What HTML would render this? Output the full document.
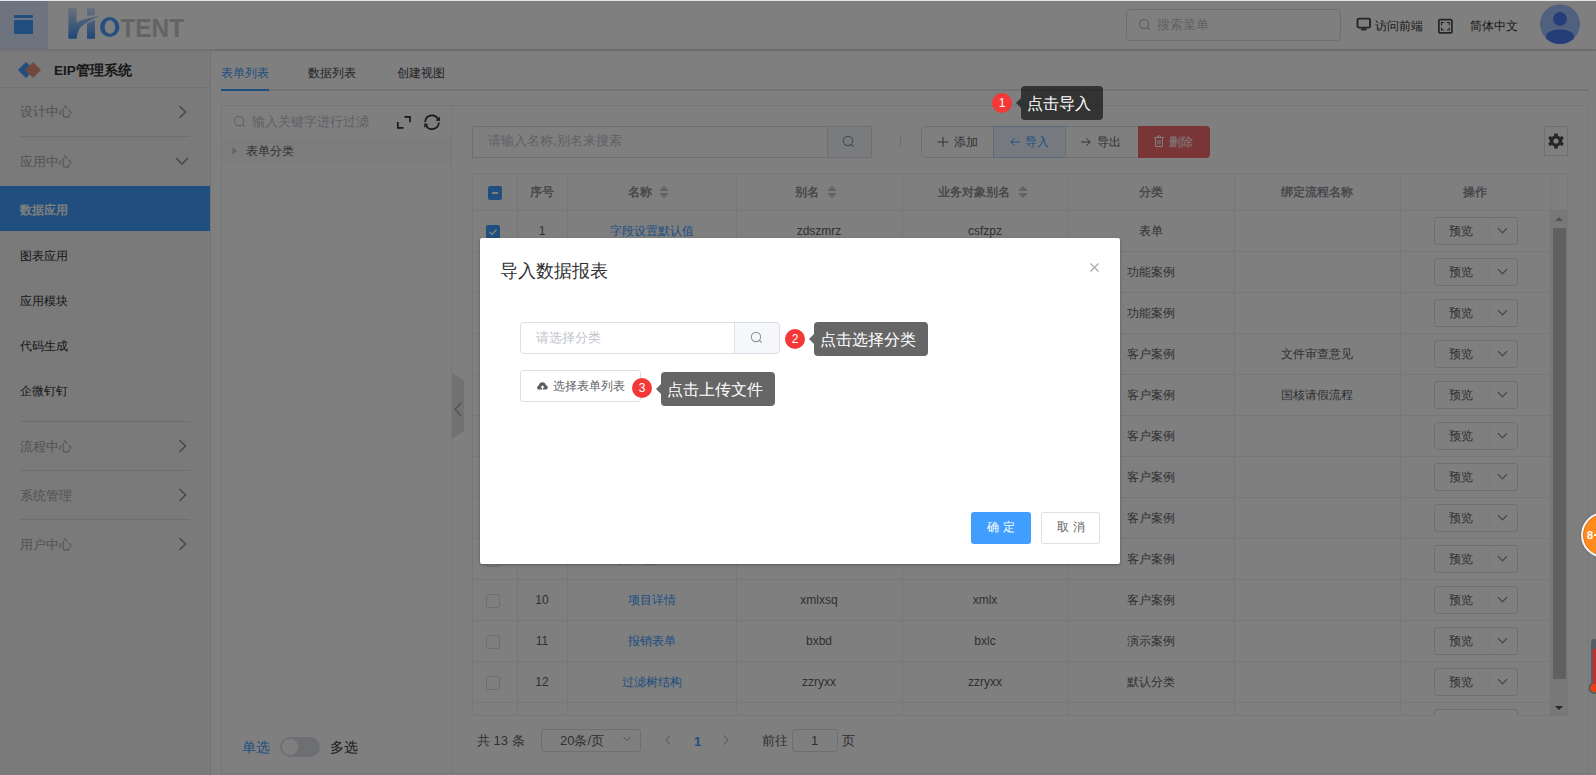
<!DOCTYPE html>
<html><head><meta charset="utf-8">
<style>
*{box-sizing:border-box;margin:0;padding:0}
html,body{width:1596px;height:775px;overflow:hidden;background:#fff;font-family:"Liberation Sans",sans-serif;color:#303133}
.a{position:absolute}
.t{position:absolute;white-space:nowrap;line-height:1}
.mi{position:absolute;left:20px;font-size:13px;line-height:14px;color:#a3a6ad;white-space:nowrap}
.si{position:absolute;left:20px;font-size:12px;line-height:12px;color:#303133;white-space:nowrap}
.sep{position:absolute;left:20px;width:170px;height:1px;background:#dcdcdc}
.vl{position:absolute;width:1px;background:#ebeef5}
.hl{position:absolute;height:1px;background:#ebeef5}
.cell{position:absolute;font-size:12px;line-height:12px;text-align:center;white-space:nowrap;color:#606266}
.hcell{position:absolute;font-size:12px;line-height:12px;text-align:center;white-space:nowrap;color:#909399;font-weight:bold}
.cb{position:absolute;width:14px;height:14px;border:1px solid #dcdfe6;border-radius:2px;background:#fff}
.pv{position:absolute;left:1434px;width:84px;height:28px;border:1px solid #dcdfe6;border-radius:3px;background:#fff}
.pv span{position:absolute;left:14px;top:7px;font-size:12px;line-height:12px;color:#606266}
.pv i{position:absolute;left:54px;top:5px;width:1px;height:16px;background:#ebeef5}
.pv b{position:absolute;left:64px;top:7px;width:7px;height:7px;border-right:1px solid #7a7c80;border-bottom:1px solid #7a7c80;transform:rotate(45deg)}
.sort{position:absolute;width:8px;height:12px}
.sort:before{content:"";position:absolute;left:-1px;top:0;border-left:5px solid transparent;border-right:5px solid transparent;border-bottom:5px solid #c0c4cc}
.sort:after{content:"";position:absolute;left:-1px;top:7px;border-left:5px solid transparent;border-right:5px solid transparent;border-top:5px solid #c0c4cc}
#mask{left:0;top:0;width:1596px;height:775px;background:rgba(0,0,0,.5)}
.badge{position:absolute;width:20px;height:20px;border-radius:50%;background:#f43838;color:#fff;font-size:12px;line-height:20px;text-align:center}
.tip{position:absolute;height:34px;border-radius:4px;color:#fff;font-size:16px;line-height:36px;white-space:nowrap;padding-left:6px}
.tip:before{content:"";position:absolute;left:-5px;top:12px;border-top:5px solid transparent;border-bottom:5px solid transparent;border-right:5px solid currentColor}
</style></head><body>

<div class="a" style="left:0;top:0;width:1596px;height:49px;background:#fff;box-shadow:0 1px 3px rgba(0,0,0,.12)"></div>
<div class="a" style="left:0;top:1px;width:48px;height:48px;background:#dde9ff"></div>
<div class="a" style="left:14px;top:15px;width:19px;height:3px;background:#409eff;border-radius:1px"></div>
<div class="a" style="left:14px;top:20px;width:19px;height:14px;background:#409eff;border-radius:1px"></div>
<svg class="a" style="left:0;top:0" width="200" height="50">
<defs><linearGradient id="lg" gradientUnits="userSpaceOnUse" x1="0" y1="8" x2="0" y2="39"><stop offset="0" stop-color="#d2e2f8"/><stop offset="1" stop-color="#3f8cf0"/></linearGradient></defs>
<path fill="url(#lg)" d="M68.4,8 H76.5 V22.4 C80,20.6 84,19.2 87,18.5 C91,17.5 95,16.4 99.8,15.6 C97,17.2 91,20.3 87,22.4 C83,24.5 79.5,27.5 78.3,31 C77.3,34 76.9,36.5 76.7,38.7 H68.4 Z"/>
<path fill="url(#lg)" d="M87,8 H95 V15 L87,15.9 Z"/>
<path fill="url(#lg)" d="M87,23.4 L95,19.7 V38.7 H87 Z"/>
<path fill-rule="evenodd" fill="#4a9eff" d="M100,27 A9.75,10 0 1 0 119.5,27 A9.75,10 0 1 0 100,27 Z M104.6,27 A5.3,6.7 0 1 0 115.2,27 A5.3,6.7 0 1 0 104.6,27 Z"/>
<text x="120.5" y="37" font-family="Liberation Sans" font-weight="bold" font-size="25.5" fill="#c6c6c6" textLength="63.5" lengthAdjust="spacingAndGlyphs">TENT</text>
</svg>
<div class="a" style="left:1126px;top:9px;width:215px;height:32px;border:1px solid #dcdfe6;border-radius:4px;background:#fff"></div>
<svg class="a" style="left:1138px;top:18px" width="14" height="14"><circle cx="6" cy="6" r="4.6" fill="none" stroke="#c0c4cc" stroke-width="1.2"/><path d="M9.3,9.3 L11.5,11.5" stroke="#c0c4cc" stroke-width="1.3"/></svg>
<div class="t" style="left:1157px;top:18px;font-size:13px;color:#c0c4cc">搜索菜单</div>
<svg class="a" style="left:1356px;top:17px" width="16" height="15"><rect x="1.5" y="1.6" width="12.6" height="9" rx="1.5" fill="none" stroke="#4a4b4e" stroke-width="1.9"/><rect x="5" y="11.5" width="5.6" height="1.9" fill="#4a4b4e"/></svg>
<div class="t" style="left:1375px;top:19.5px;font-size:12px;color:#303133">访问前端</div>
<svg class="a" style="left:1437px;top:18px" width="17" height="17"><rect x="1.9" y="1.6" width="13" height="13.3" rx="1.2" fill="none" stroke="#4a4b4e" stroke-width="1.7"/><path d="M4.5,7.2 V4.5 H7.2 M9.8,4.5 H12.3 V7.2 M12.3,9.6 V12 H9.8 M7.2,12 H4.5 V9.6" fill="none" stroke="#4a4b4e" stroke-width="1.2"/></svg>
<div class="t" style="left:1470px;top:20px;font-size:12px;color:#303133">简体中文</div>
<svg class="a" style="left:1539px;top:4px" width="42" height="41"><defs><clipPath id="cc"><circle cx="21" cy="20.2" r="20"/></clipPath></defs><circle cx="21" cy="20.2" r="20" fill="#a0c0ff"/><g clip-path="url(#cc)" fill="#4a7af0"><circle cx="21" cy="14.9" r="7"/><ellipse cx="21" cy="32.7" rx="14" ry="7.2"/></g></svg>

<div class="a" style="left:0;top:49px;width:210px;height:726px;background:#f4f4f5"></div>
<div class="a" style="left:210px;top:50px;width:1386px;height:725px;border-left:1px solid #e4e7ed;border-top:1px solid #e4e7ed"></div>
<svg class="a" style="left:16px;top:60px" width="28" height="20"><path d="M10,3 L17,10 L10,17 L3,10 Z" fill="#409eff" stroke="#409eff" stroke-width="1.6" stroke-linejoin="round"/><path d="M17,3 L24,10 L17,17 L10,10 Z" fill="#e3927c" stroke="#e3927c" stroke-width="1.6" stroke-linejoin="round"/></svg>
<div class="t" style="left:54px;top:64px;font-size:13.5px;font-weight:bold;color:#303133">EIP管理系统</div>
<div class="a" style="left:0;top:87px;width:210px;height:1px;background:#e2e2e2"></div>
<div class="mi" style="top:105px">设计中心</div>
<svg class="a" style="left:176px;top:104px" width="14" height="16"><path d="M3.5,2 L9.5,8 L3.5,14" fill="none" stroke="#909399" stroke-width="1.6"/></svg>
<div class="sep" style="top:136px"></div>
<div class="mi" style="top:155px">应用中心</div>
<svg class="a" style="left:174px;top:155px" width="16" height="12"><path d="M2,3 L8,9 L14,3" fill="none" stroke="#909399" stroke-width="1.6"/></svg>
<div class="a" style="left:0;top:186px;width:210px;height:45px;background:#409eff"></div>
<div class="si" style="top:204px;color:#fff;font-weight:bold">数据应用</div>
<div class="si" style="top:250px">图表应用</div>
<div class="si" style="top:295px">应用模块</div>
<div class="si" style="top:340px">代码生成</div>
<div class="si" style="top:385px">企微钉钉</div>
<div class="sep" style="top:421px"></div>
<div class="mi" style="top:440px">流程中心</div>
<svg class="a" style="left:176px;top:438px" width="14" height="16"><path d="M3.5,2 L9.5,8 L3.5,14" fill="none" stroke="#909399" stroke-width="1.6"/></svg>
<div class="sep" style="top:470px"></div>
<div class="mi" style="top:489px">系统管理</div>
<svg class="a" style="left:176px;top:487px" width="14" height="16"><path d="M3.5,2 L9.5,8 L3.5,14" fill="none" stroke="#909399" stroke-width="1.6"/></svg>
<div class="sep" style="top:519px"></div>
<div class="mi" style="top:538px">用户中心</div>
<svg class="a" style="left:176px;top:536px" width="14" height="16"><path d="M3.5,2 L9.5,8 L3.5,14" fill="none" stroke="#909399" stroke-width="1.6"/></svg>

<div class="a" style="left:0;top:49px;width:1596px;height:3px;background:linear-gradient(rgba(0,0,0,.09),rgba(0,0,0,0))"></div>
<div class="t" style="left:221px;top:67px;font-size:12px;color:#409eff">表单列表</div>
<div class="t" style="left:308px;top:67px;font-size:12px;color:#46484c">数据列表</div>
<div class="t" style="left:397px;top:67px;font-size:12px;color:#46484c">创建视图</div>
<div class="a" style="left:221px;top:89px;width:1368px;height:2px;background:#e4e7ed"></div>
<div class="a" style="left:221px;top:89px;width:48px;height:2px;background:#409eff"></div>

<div class="a" style="left:221px;top:105px;width:231px;height:669px;border:1px solid #ebeef5;background:#fff"></div>
<svg class="a" style="left:233px;top:115px" width="14" height="14"><circle cx="6" cy="6" r="4.6" fill="none" stroke="#c0c4cc" stroke-width="1.1"/><path d="M9.3,9.3 L11.5,11.5" stroke="#c0c4cc" stroke-width="1.2"/></svg>
<div class="t" style="left:252px;top:115px;font-size:13px;color:#c0c4cc">输入关键字进行过滤</div>
<svg class="a" style="left:396px;top:114px" width="16" height="16"><path d="M1.8,8 V13.9 H7.5 M8.5,2.8 H14 V8.2" fill="none" stroke="#303133" stroke-width="1.7"/></svg>
<svg class="a" style="left:423px;top:113px" width="18" height="18"><path d="M2.2,9.2 A6.8,6.8 0 0 1 14.9,5.8 M15.8,9.4 A6.8,6.8 0 0 1 3.1,12.6" fill="none" stroke="#303133" stroke-width="1.7"/><path d="M12.6,7.4 L16.9,3.6 L16.9,7.9 Z M5.4,11 L1.3,14.8 L1.3,10.5 Z" fill="#303133"/></svg>
<div class="a" style="left:222px;top:138px;width:229px;height:25px;background:#fafafa"></div>
<svg class="a" style="left:231px;top:146px" width="8" height="10"><path d="M1.5,1.5 L6,5 L1.5,8.5 Z" fill="#c0c4cc"/></svg>
<div class="t" style="left:246px;top:145px;font-size:12px;color:#606266">表单分类</div>
<div class="t" style="left:242px;top:740px;font-size:14px;color:#409eff">单选</div>
<div class="a" style="left:280px;top:737px;width:40px;height:20px;border-radius:10px;background:#dcdfe6"></div>
<div class="a" style="left:282px;top:739px;width:16px;height:16px;border-radius:50%;background:#fff"></div>
<div class="t" style="left:330px;top:740px;font-size:14px;color:#303133">多选</div>

<div class="a" style="left:452px;top:105px;width:1137px;height:669px;border:1px solid #ebeef5;border-left:none;background:#fff"></div>
<div class="a" style="left:472px;top:126px;width:400px;height:32px;border:1px solid #dcdfe6;background:#fff"></div>
<div class="a" style="left:827px;top:126px;width:45px;height:32px;border:1px solid #dcdfe6;background:#f5f7fa"></div>
<div class="t" style="left:488px;top:134px;font-size:13px;color:#c0c4cc">请输入名称,别名来搜索</div>
<svg class="a" style="left:842px;top:135px" width="14" height="14"><circle cx="6" cy="6" r="4.6" fill="none" stroke="#909399" stroke-width="1.1"/><path d="M9.3,9.3 L11.5,11.5" stroke="#909399" stroke-width="1.2"/></svg>
<div class="a" style="left:900px;top:136px;width:1px;height:12px;background:#dcdfe6"></div>
<div class="a" style="left:921px;top:126px;width:289px;height:32px;border:1px solid #dcdfe6;border-radius:4px;background:#fff"></div>
<div class="a" style="left:993px;top:126px;width:73px;height:32px;border:1px solid #b3d8ff;background:#ecf5ff"></div>
<div class="a" style="left:1065px;top:126px;width:1px;height:32px;background:#dcdfe6"></div>
<div class="a" style="left:1138px;top:126px;width:72px;height:32px;background:#f56c6c;border-radius:0 4px 4px 0"></div>
<svg class="a" style="left:936px;top:135px" width="14" height="14"><path d="M7,2 V12 M1.5,7 H12.5" stroke="#606266" stroke-width="1"/></svg>
<div class="t" style="left:954px;top:136px;font-size:12px;color:#606266">添加</div>
<svg class="a" style="left:1008px;top:135px" width="14" height="14"><path d="M12,7 H2.8 M6.5,3.3 L2.8,7 L6.5,10.7" fill="none" stroke="#409eff" stroke-width="1"/></svg>
<div class="t" style="left:1025px;top:136px;font-size:12px;color:#409eff">导入</div>
<svg class="a" style="left:1079px;top:135px" width="14" height="14"><path d="M2,7 H11.2 M7.5,3.3 L11.2,7 L7.5,10.7" fill="none" stroke="#606266" stroke-width="1"/></svg>
<div class="t" style="left:1097px;top:136px;font-size:12px;color:#606266">导出</div>
<svg class="a" style="left:1152px;top:134px" width="14" height="15"><path d="M2,3.5 H12 M5.5,3.5 V2 H8.5 V3.5 M3.5,3.5 V12.5 H10.5 V3.5 M6,6 V10.5 M8,6 V10.5" fill="none" stroke="#fff" stroke-width="1"/></svg>
<div class="t" style="left:1169px;top:136px;font-size:12px;color:#fff">删除</div>
<div class="a" style="left:1544px;top:126px;width:24px;height:30px;border:1px solid #dcdfe6;background:#fff"></div>
<svg class="a" style="left:1547px;top:132px" width="18" height="18"><g transform="translate(9,9)" fill="#4a4b4d"><path d="M-1.6,-7.5 H1.6 L2,-5.2 L4.2,-4 L6.3,-5 L7.8,-2.4 L6.1,-0.9 V0.9 L7.8,2.4 L6.3,5 L4.2,4 L2,5.2 L1.6,7.5 H-1.6 L-2,5.2 L-4.2,4 L-6.3,5 L-7.8,2.4 L-6.1,0.9 V-0.9 L-7.8,-2.4 L-6.3,-5 L-4.2,-4 L-2,-5.2 Z"/><circle r="2.6" fill="#fff"/></g></svg>

<svg class="a" style="left:452px;top:373px" width="13" height="66"><path d="M0,0 L12,7 L12,58 L0,66 Z" fill="#e4e4e4"/><path d="M9,30 L3,36.5 L9,43" fill="none" stroke="#a0a0a0" stroke-width="1.2"/></svg>

<div class="a" style="left:472px;top:173px;width:1096px;height:543px;border:1px solid #ebeef5;background:#fff"></div>
<div class="vl" style="left:517px;top:173px;height:543px"></div>
<div class="vl" style="left:567px;top:173px;height:543px"></div>
<div class="vl" style="left:736px;top:173px;height:543px"></div>
<div class="vl" style="left:902px;top:173px;height:543px"></div>
<div class="vl" style="left:1068px;top:173px;height:543px"></div>
<div class="vl" style="left:1234px;top:173px;height:543px"></div>
<div class="vl" style="left:1400px;top:173px;height:543px"></div>
<div class="vl" style="left:1550px;top:173px;height:543px"></div>
<div class="hl" style="left:472px;top:210px;width:1096px"></div>
<div class="hl" style="left:472px;top:251px;width:1078px"></div>
<div class="hl" style="left:472px;top:292px;width:1078px"></div>
<div class="hl" style="left:472px;top:333px;width:1078px"></div>
<div class="hl" style="left:472px;top:374px;width:1078px"></div>
<div class="hl" style="left:472px;top:415px;width:1078px"></div>
<div class="hl" style="left:472px;top:456px;width:1078px"></div>
<div class="hl" style="left:472px;top:497px;width:1078px"></div>
<div class="hl" style="left:472px;top:538px;width:1078px"></div>
<div class="hl" style="left:472px;top:579px;width:1078px"></div>
<div class="hl" style="left:472px;top:620px;width:1078px"></div>
<div class="hl" style="left:472px;top:661px;width:1078px"></div>
<div class="hl" style="left:472px;top:702px;width:1078px"></div>
<div class="a" style="left:488px;top:186px;width:14px;height:14px;background:#409eff;border-radius:2px"></div><div class="a" style="left:492px;top:192px;width:6px;height:2px;background:#fff"></div>
<div class="hcell" style="left:517px;top:186px;width:50px">序号</div>
<div class="hcell" style="left:628px;top:186px;text-align:left">名称</div>
<div class="sort" style="left:660px;top:186px"></div>
<div class="hcell" style="left:795px;top:186px;text-align:left">别名</div>
<div class="sort" style="left:828px;top:186px"></div>
<div class="hcell" style="left:938px;top:186px;text-align:left">业务对象别名</div>
<div class="sort" style="left:1019px;top:186px"></div>
<div class="hcell" style="left:1068px;top:186px;width:166px">分类</div>
<div class="hcell" style="left:1234px;top:186px;width:166px">绑定流程名称</div>
<div class="hcell" style="left:1400px;top:186px;width:150px">操作</div>
<div class="a" style="left:0;top:0;width:1596px;height:775px;clip-path:inset(211px 0 59px 0)">
<div class="a" style="left:486px;top:225px;width:14px;height:14px;background:#409eff;border-radius:2px"></div><svg class="a" style="left:486px;top:225px" width="14" height="14"><path d="M3.5,7 L6,9.5 L10.5,4.5" fill="none" stroke="#fff" stroke-width="1.3"/></svg>
<div class="cell" style="left:517px;top:225px;width:50px;color:#606266">1</div>
<div class="cell" style="left:567px;top:225px;width:169px;color:#409eff">字段设置默认值</div>
<div class="cell" style="left:736px;top:225px;width:166px;color:#606266">zdszmrz</div>
<div class="cell" style="left:902px;top:225px;width:166px;color:#606266">csfzpz</div>
<div class="cell" style="left:1068px;top:225px;width:166px;color:#606266">表单</div>
<div class="pv" style="top:217px"><span>预览</span><i></i><b></b></div>
<div class="cb" style="left:486px;top:266px"></div>
<div class="cell" style="left:517px;top:266px;width:50px;color:#606266">2</div>
<div class="cell" style="left:567px;top:266px;width:169px;color:#409eff">流程表单示例</div>
<div class="cell" style="left:736px;top:266px;width:166px;color:#606266">lcbdsl</div>
<div class="cell" style="left:902px;top:266px;width:166px;color:#606266">lcbd</div>
<div class="cell" style="left:1068px;top:266px;width:166px;color:#606266">功能案例</div>
<div class="pv" style="top:258px"><span>预览</span><i></i><b></b></div>
<div class="cb" style="left:486px;top:307px"></div>
<div class="cell" style="left:517px;top:307px;width:50px;color:#606266">3</div>
<div class="cell" style="left:567px;top:307px;width:169px;color:#409eff">表单数据示例</div>
<div class="cell" style="left:736px;top:307px;width:166px;color:#606266">bdsjsl</div>
<div class="cell" style="left:902px;top:307px;width:166px;color:#606266">bdsj</div>
<div class="cell" style="left:1068px;top:307px;width:166px;color:#606266">功能案例</div>
<div class="pv" style="top:299px"><span>预览</span><i></i><b></b></div>
<div class="cb" style="left:486px;top:348px"></div>
<div class="cell" style="left:517px;top:348px;width:50px;color:#606266">4</div>
<div class="cell" style="left:567px;top:348px;width:169px;color:#409eff">文件审查意见</div>
<div class="cell" style="left:736px;top:348px;width:166px;color:#606266">wjscyj</div>
<div class="cell" style="left:902px;top:348px;width:166px;color:#606266">wjsc</div>
<div class="cell" style="left:1068px;top:348px;width:166px;color:#606266">客户案例</div>
<div class="cell" style="left:1234px;top:348px;width:166px;color:#606266">文件审查意见</div>
<div class="pv" style="top:340px"><span>预览</span><i></i><b></b></div>
<div class="cb" style="left:486px;top:389px"></div>
<div class="cell" style="left:517px;top:389px;width:50px;color:#606266">5</div>
<div class="cell" style="left:567px;top:389px;width:169px;color:#409eff">国核请假流程</div>
<div class="cell" style="left:736px;top:389px;width:166px;color:#606266">ghqjlc</div>
<div class="cell" style="left:902px;top:389px;width:166px;color:#606266">ghqj</div>
<div class="cell" style="left:1068px;top:389px;width:166px;color:#606266">客户案例</div>
<div class="cell" style="left:1234px;top:389px;width:166px;color:#606266">国核请假流程</div>
<div class="pv" style="top:381px"><span>预览</span><i></i><b></b></div>
<div class="cb" style="left:486px;top:430px"></div>
<div class="cell" style="left:517px;top:430px;width:50px;color:#606266">6</div>
<div class="cell" style="left:567px;top:430px;width:169px;color:#409eff">客户信息登记</div>
<div class="cell" style="left:736px;top:430px;width:166px;color:#606266">khxxdj</div>
<div class="cell" style="left:902px;top:430px;width:166px;color:#606266">khxx</div>
<div class="cell" style="left:1068px;top:430px;width:166px;color:#606266">客户案例</div>
<div class="pv" style="top:422px"><span>预览</span><i></i><b></b></div>
<div class="cb" style="left:486px;top:471px"></div>
<div class="cell" style="left:517px;top:471px;width:50px;color:#606266">7</div>
<div class="cell" style="left:567px;top:471px;width:169px;color:#409eff">合同审批表单</div>
<div class="cell" style="left:736px;top:471px;width:166px;color:#606266">htspbd</div>
<div class="cell" style="left:902px;top:471px;width:166px;color:#606266">htsp</div>
<div class="cell" style="left:1068px;top:471px;width:166px;color:#606266">客户案例</div>
<div class="pv" style="top:463px"><span>预览</span><i></i><b></b></div>
<div class="cb" style="left:486px;top:512px"></div>
<div class="cell" style="left:517px;top:512px;width:50px;color:#606266">8</div>
<div class="cell" style="left:567px;top:512px;width:169px;color:#409eff">项目立项申请</div>
<div class="cell" style="left:736px;top:512px;width:166px;color:#606266">xmlxsq2</div>
<div class="cell" style="left:902px;top:512px;width:166px;color:#606266">xmlx2</div>
<div class="cell" style="left:1068px;top:512px;width:166px;color:#606266">客户案例</div>
<div class="pv" style="top:504px"><span>预览</span><i></i><b></b></div>
<div class="cb" style="left:486px;top:553px"></div>
<div class="cell" style="left:517px;top:553px;width:50px;color:#606266">9</div>
<div class="cell" style="left:567px;top:553px;width:169px;color:#409eff">项目进度管理</div>
<div class="cell" style="left:736px;top:553px;width:166px;color:#606266">xmxxdc</div>
<div class="cell" style="left:902px;top:553px;width:166px;color:#606266">xmxx</div>
<div class="cell" style="left:1068px;top:553px;width:166px;color:#606266">客户案例</div>
<div class="pv" style="top:545px"><span>预览</span><i></i><b></b></div>
<div class="cb" style="left:486px;top:594px"></div>
<div class="cell" style="left:517px;top:594px;width:50px;color:#606266">10</div>
<div class="cell" style="left:567px;top:594px;width:169px;color:#409eff">项目详情</div>
<div class="cell" style="left:736px;top:594px;width:166px;color:#606266">xmlxsq</div>
<div class="cell" style="left:902px;top:594px;width:166px;color:#606266">xmlx</div>
<div class="cell" style="left:1068px;top:594px;width:166px;color:#606266">客户案例</div>
<div class="pv" style="top:586px"><span>预览</span><i></i><b></b></div>
<div class="cb" style="left:486px;top:635px"></div>
<div class="cell" style="left:517px;top:635px;width:50px;color:#606266">11</div>
<div class="cell" style="left:567px;top:635px;width:169px;color:#409eff">报销表单</div>
<div class="cell" style="left:736px;top:635px;width:166px;color:#606266">bxbd</div>
<div class="cell" style="left:902px;top:635px;width:166px;color:#606266">bxlc</div>
<div class="cell" style="left:1068px;top:635px;width:166px;color:#606266">演示案例</div>
<div class="pv" style="top:627px"><span>预览</span><i></i><b></b></div>
<div class="cb" style="left:486px;top:676px"></div>
<div class="cell" style="left:517px;top:676px;width:50px;color:#606266">12</div>
<div class="cell" style="left:567px;top:676px;width:169px;color:#409eff">过滤树结构</div>
<div class="cell" style="left:736px;top:676px;width:166px;color:#606266">zzryxx</div>
<div class="cell" style="left:902px;top:676px;width:166px;color:#606266">zzryxx</div>
<div class="cell" style="left:1068px;top:676px;width:166px;color:#606266">默认分类</div>
<div class="pv" style="top:668px"><span>预览</span><i></i><b></b></div>
<div class="cb" style="left:486px;top:717px"></div>
<div class="pv" style="top:709px"><span>预览</span><i></i><b></b></div>
</div>
<div class="a" style="left:1551px;top:211px;width:17px;height:505px;background:#f1f1f1"></div>
<div class="a" style="left:1553px;top:228px;width:13px;height:451px;background:#c1c1c1"></div>
<svg class="a" style="left:1554px;top:215px" width="10" height="8"><path d="M1,6 L5,2 L9,6 Z" fill="#a3a3a3"/></svg>
<svg class="a" style="left:1554px;top:704px" width="10" height="8"><path d="M1,2 L5,6 L9,2 Z" fill="#505050"/></svg>

<div class="t" style="left:477px;top:734px;font-size:13px;color:#606266">共 13 条</div>
<div class="a" style="left:541px;top:729px;width:100px;height:23px;border:1px solid #dcdfe6;border-radius:3px;background:#fff"></div>
<div class="t" style="left:560px;top:734px;font-size:13px;color:#606266">20条/页</div>
<svg class="a" style="left:622px;top:735px" width="10" height="8"><path d="M1.5,2 L5,5.5 L8.5,2" fill="none" stroke="#c0c4cc" stroke-width="1.1"/></svg>
<svg class="a" style="left:663px;top:734px" width="10" height="12"><path d="M7,1.5 L3,6 L7,10.5" fill="none" stroke="#c0c4cc" stroke-width="1.2"/></svg>
<div class="t" style="left:694px;top:735px;font-size:13px;font-weight:bold;color:#409eff">1</div>
<svg class="a" style="left:721px;top:734px" width="10" height="12"><path d="M3,1.5 L7,6 L3,10.5" fill="none" stroke="#c0c4cc" stroke-width="1.2"/></svg>
<div class="t" style="left:762px;top:734px;font-size:13px;color:#606266">前往</div>
<div class="a" style="left:792px;top:729px;width:46px;height:23px;border:1px solid #dcdfe6;border-radius:3px;background:#fff"></div>
<div class="t" style="left:811px;top:734px;font-size:13px;color:#606266">1</div>
<div class="t" style="left:842px;top:734px;font-size:13px;color:#606266">页</div>

<div id="mask" class="a"></div>
<div class="a" style="left:0;top:0;width:1596px;height:1px;background:#e6e7ea"></div>
<div class="a" style="left:480px;top:238px;width:640px;height:326px;background:#fff;border-radius:2px;box-shadow:0 1px 3px rgba(0,0,0,.3)"></div>
<div class="t" style="left:500px;top:262px;font-size:18px;color:#303133">导入数据报表</div>
<svg class="a" style="left:1089px;top:262px" width="11" height="11"><path d="M1.5,1.5 L9.5,9.5 M9.5,1.5 L1.5,9.5" stroke="#a4a7ad" stroke-width="1.1"/></svg>
<div class="a" style="left:520px;top:322px;width:260px;height:32px;border:1px solid #dcdfe6;border-radius:4px;background:#fff"></div>
<div class="a" style="left:734px;top:322px;width:46px;height:32px;border:1px solid #dcdfe6;border-radius:0 4px 4px 0;background:#f5f7fa"></div>
<div class="t" style="left:536px;top:331px;font-size:13px;color:#c0c4cc">请选择分类</div>
<svg class="a" style="left:750px;top:331px" width="14" height="14"><circle cx="6" cy="6" r="4.6" fill="none" stroke="#909399" stroke-width="1.1"/><path d="M9.3,9.3 L11.5,11.5" stroke="#909399" stroke-width="1.2"/></svg>
<div class="a" style="left:520px;top:370px;width:121px;height:32px;border:1px solid #dcdfe6;border-radius:3px;background:#fff"></div>
<svg class="a" style="left:536px;top:380px" width="13" height="11"><path d="M3.2,9.6 C0.6,9.6 0.4,5.6 2.9,5.4 C3.3,1.2 9.4,1.1 9.9,5.3 C12.4,5.5 12.3,9.6 9.8,9.6 Z" fill="#5a5b5e"/><path d="M6.5,9.6 V6.2 M5,7.6 L6.5,6.1 L8,7.6" fill="none" stroke="#fff" stroke-width="1.1"/></svg>
<div class="t" style="left:553px;top:380px;font-size:12px;color:#606266">选择表单列表</div>
<div class="a" style="left:971px;top:512px;width:60px;height:32px;background:#409eff;border-radius:3px"></div>
<div class="t" style="left:987px;top:521px;font-size:12px;color:#fff;letter-spacing:4px">确定</div>
<div class="a" style="left:1041px;top:512px;width:59px;height:32px;border:1px solid #dcdfe6;border-radius:3px;background:#fff"></div>
<div class="t" style="left:1057px;top:521px;font-size:12px;color:#606266;letter-spacing:4px">取消</div>

<div class="badge" style="left:992px;top:93px">1</div>
<div class="tip" style="left:1021px;top:86px;width:82px;background:rgba(0,0,0,.6);color:rgba(0,0,0,.6)"><span style="color:#fff">点击导入</span></div>
<div class="badge" style="left:785px;top:329px">2</div>
<div class="tip" style="left:814px;top:322px;width:114px;background:rgba(0,0,0,.6);color:rgba(0,0,0,.6)"><span style="color:#fff">点击选择分类</span></div>
<div class="badge" style="left:632px;top:378px">3</div>
<div class="tip" style="left:661px;top:372px;width:114px;background:rgba(0,0,0,.6);color:rgba(0,0,0,.6)"><span style="color:#fff">点击上传文件</span></div>

<div class="a" style="left:1581px;top:512px;width:46px;height:46px;border-radius:50%;background:#ff8a1c;border:2px solid #f4f4f4;box-shadow:0 0 2px rgba(0,0,0,.4),inset 0 0 0 1px #e07010"></div>
<div class="t" style="left:1587px;top:530px;font-size:11px;font-weight:bold;color:#fff">8</div>
<div class="t" style="left:1594px;top:534px;width:4px;height:2px;background:#fff"></div>
<svg class="a" style="left:1584px;top:636px" width="12" height="62"><rect x="7" y="3" width="7" height="50" rx="3.5" fill="#525c66"/><circle cx="10.5" cy="52" r="6" fill="#525c66"/><rect x="9" y="13" width="2.5" height="40" fill="#e3251b"/><circle cx="10.5" cy="52" r="4.3" fill="#ec3f10"/></svg>

</body></html>
